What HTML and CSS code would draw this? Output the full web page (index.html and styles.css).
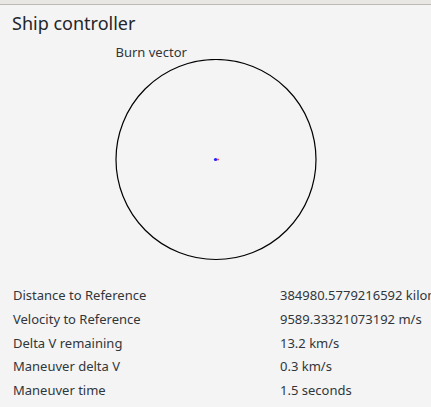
FILE: index.html
```html
<!DOCTYPE html>
<html>
<head>
<meta charset="utf-8">
<link rel="stylesheet" href="styles.css">
</head>
<body>
<div class="topbar"></div>
<div class="window">
  <h1 class="title">Ship controller</h1>
  <div class="burn">
    <div class="burn-label">Burn vector</div>
    <svg class="burn-svg" width="202" height="202" viewBox="0 0 202 202">
      <circle cx="101" cy="100.5" r="100" fill="none" stroke="#000" stroke-width="1.2"/>
      <rect x="101" y="99.7" width="3" height="1.6" fill="#ff5050"/>
      <circle cx="100.5" cy="100.5" r="1.6" fill="#2020ff"/>
    </svg>
  </div>
  <div class="stats">
    <div class="label">Distance to Reference</div><div class="value">384980.5779216592 kilometers</div>
    <div class="label">Velocity to Reference</div><div class="value">9589.33321073192 m/s</div>
    <div class="label">Delta V remaining</div><div class="value">13.2 km/s</div>
    <div class="label">Maneuver delta V</div><div class="value">0.3 km/s</div>
    <div class="label">Maneuver time</div><div class="value">1.5 seconds</div>
  </div>
</div>
</body>
</html>
```

FILE: styles.css
```css
html, body {
  margin: 0;
  padding: 0;
  background: #f4f4f4;
  overflow: hidden;
}
body {
  width: 431px;
  height: 407px;
  font-family: "Noto Sans", "Open Sans", sans-serif;
  color: #31363b;
}
.topbar {
  height: 4px;
  background: #e9e7e4;
  border-bottom: 1px solid #bdb9b4;
}
.window {
  display: flex;
  flex-direction: column;
}
.title {
  margin: 0;
  padding: 6px 0 0 12px;
  font-size: 18px;
  font-weight: normal;
  line-height: 24px;
  color: #232629;
}
.burn {
  align-self: center;
  display: flex;
  flex-direction: column;
  margin-top: 10px;
  margin-left: 1px;
}
.burn-label {
  font-size: 13px;
  line-height: 14px;
}
.burn-svg {
  display: block;
  margin-left: -1px;
}
.stats {
  display: grid;
  grid-template-columns: 267px 1fr;
  padding: 25px 0 0 13px;
  row-gap: 5.75px;
  font-size: 13px;
  line-height: 18px;
  white-space: nowrap;
}
.stats .value {
  overflow: hidden;
}
```
